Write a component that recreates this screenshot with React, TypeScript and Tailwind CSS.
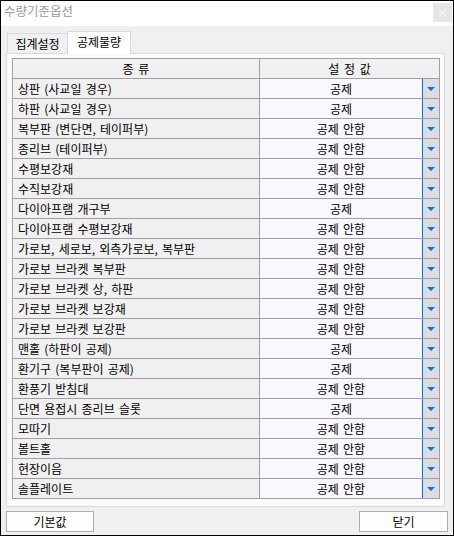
import React from "react";

type Row = { name: string; value: string };

const rows: Row[] = [
  { name: "상판 (사교일 경우)", value: "공제" },
  { name: "하판 (사교일 경우)", value: "공제" },
  { name: "복부판 (변단면, 테이퍼부)", value: "공제 안함" },
  { name: "종리브 (테이퍼부)", value: "공제 안함" },
  { name: "수평보강재", value: "공제 안함" },
  { name: "수직보강재", value: "공제 안함" },
  { name: "다이아프램 개구부", value: "공제" },
  { name: "다이아프램 수평보강재", value: "공제 안함" },
  { name: "가로보, 세로보, 외측가로보, 복부판", value: "공제 안함" },
  { name: "가로보 브라켓 복부판", value: "공제 안함" },
  { name: "가로보 브라켓 상, 하판", value: "공제 안함" },
  { name: "가로보 브라켓 보강재", value: "공제 안함" },
  { name: "가로보 브라켓 보강판", value: "공제 안함" },
  { name: "맨홀 (하판이 공제)", value: "공제" },
  { name: "환기구 (복부판이 공제)", value: "공제" },
  { name: "환풍기 받침대", value: "공제 안함" },
  { name: "단면 용접시 종리브 슬롯", value: "공제" },
  { name: "모따기", value: "공제 안함" },
  { name: "볼트홀", value: "공제 안함" },
  { name: "현장이음", value: "공제 안함" },
  { name: "솔플레이트", value: "공제 안함" },
];

const font = {
  fontFamily: '"Noto Sans CJK KR", "Noto Sans", sans-serif',
};

function DropButton() {
  return (
    <div className="w-[17px] h-full border-l border-[#0078d7] bg-[#dcdce6] flex items-center justify-center">
      <svg width="8" height="4" viewBox="0 0 8 4">
        <polygon points="0,0 8,0 4,4" fill="#0078d7" />
      </svg>
    </div>
  );
}

function GridRow({ row }: { row: Row }) {
  return (
    <div className="flex h-[20px] border-b border-[#a0a0a0]">
      <div className="w-[246px] bg-[#f0f0f0] flex items-center pl-[5px] text-[12px] text-black leading-none [word-spacing:1.5px]">
        {row.name}
      </div>
      <div className="w-px bg-[#a0a0a0]" />
      <div className="w-[179px] bg-[#f9f8ff] flex items-stretch">
        <div className="flex-1 flex items-center justify-center text-[12px] text-black leading-none [word-spacing:1.5px]">
          {row.value}
        </div>
        <DropButton />
      </div>
    </div>
  );
}

export default function App() {
  return (
    <div
      className="w-[454px] h-[536px] border border-black bg-[#f0f0f0] flex flex-col select-none"
      style={font}
    >
      {/* title bar */}
      <div className="h-[25px] bg-white flex items-start justify-between">
        <div className="pl-[3px] pt-[4px] text-[12.5px] leading-none text-[#9b9b9b]">
          수량기준옵션
        </div>
        <div className="mt-[2px] mr-px w-[19px] h-[19px] bg-[#e5e5e5] flex items-center justify-center text-[12px] leading-none text-[#f4f4f4] font-bold">
          ×
        </div>
      </div>

      {/* tabs */}
      <div className="mt-[5px] pl-[6px] flex items-end">
        <div className="h-[20px] w-[60px] border-t border-l border-[#d9d9d9] bg-[#f0f0f0] flex items-center justify-center text-[12px] leading-none text-black">
          집계설정
        </div>
        <div className="relative z-10 -mb-px h-[23px] w-[64px] border-t border-l border-r border-[#d9d9d9] bg-white flex items-center justify-center text-[12px] leading-none text-black pb-[2px]">
          공제물량
        </div>
      </div>

      {/* tab page */}
      <div className="ml-[5px] w-[439px] h-[454px] border border-[#d9d9d9] bg-[#fafafa] pl-[5px] pt-[4px]">
        <div className="w-[428px] border-t border-l border-r border-[#a0a0a0]">
          <div className="flex h-[20px] border-b border-[#a0a0a0] bg-[#f0f0f0]">
            <div className="w-[246px] flex items-center justify-center text-[12px] leading-none text-black [word-spacing:2px]">
              종 류
            </div>
            <div className="w-px bg-[#a0a0a0]" />
            <div className="w-[179px] flex items-center justify-center text-[12px] leading-none text-black [word-spacing:2px]">
              설 정 값
            </div>
          </div>
          {rows.map((r) => (
            <GridRow key={r.name} row={r} />
          ))}
        </div>
      </div>

      {/* footer buttons */}
      <div className="mt-[4px] px-[5px] flex justify-between">
        <button className="w-[88px] h-[21px] border border-[#adadad] bg-[#fdfdfd] text-[12px] leading-none text-black flex items-center justify-center">
          기본값
        </button>
        <button className="w-[89px] h-[21px] border border-[#adadad] bg-[#fdfdfd] text-[12px] leading-none text-black flex items-center justify-center">
          닫기
        </button>
      </div>
    </div>
  );
}
